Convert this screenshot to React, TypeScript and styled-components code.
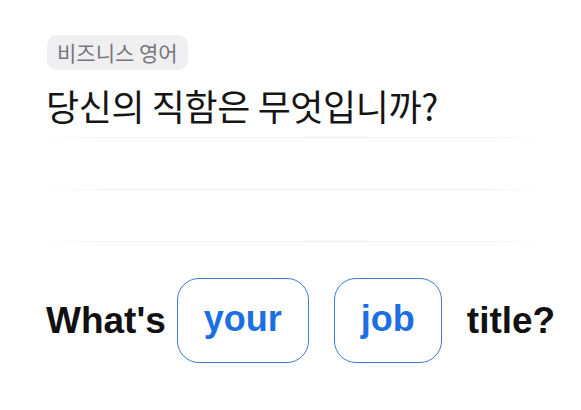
import React from 'react';
import styled, { createGlobalStyle } from 'styled-components';

const GlobalStyle = createGlobalStyle`
  html, body {
    margin: 0;
    padding: 0;
    background: #ffffff;
  }
  body {
    font-family: 'Liberation Sans', 'Noto Sans CJK KR', sans-serif;
  }
`;

const words: { text: string; slot?: boolean }[] = [
  { text: "What's" },
  { text: 'your', slot: true },
  { text: 'job', slot: true },
  { text: 'title?' },
];

const App = () => {
  return (
    <Page>
      <GlobalStyle />
      <Header>
        <Badge>비즈니스 영어</Badge>
        <Question>당신의 직함은 무엇입니까?</Question>
      </Header>
      <Rules>
        <Rule />
        <Rule />
        <Rule />
      </Rules>
      <Sentence>
        {words.map((w) =>
          w.slot ? <Slot key={w.text}>{w.text}</Slot> : <Word key={w.text}>{w.text}</Word>
        )}
      </Sentence>
    </Page>
  );
};
export default App;

const Page = styled.div`
  width: 581px;
  height: 410px;
  padding: 35px 36px 0 36px;
  box-sizing: border-box;
  display: flex;
  flex-direction: column;
`;
const Header = styled.div`
  display: flex;
  flex-direction: column;
  align-items: flex-start;
  padding-left: 11px;
`;
const Badge = styled.div`
  height: 35px;
  line-height: 35px;
  padding: 0 10px;
  border-radius: 10px;
  background: #efeff1;
  color: #76767b;
  font-family: 'Noto Sans CJK KR', sans-serif;
  font-size: 21px;
`;
const Question = styled.h1`
  margin: 15px 0 0 -1px;
  height: 40px;
  line-height: 40px;
  font-family: 'Noto Sans CJK KR', sans-serif;
  font-weight: 400;
  font-size: 36px;
  letter-spacing: -0.4px;
  color: #151515;
`;
const Rules = styled.div`
  display: flex;
  flex-direction: column;
  gap: 51px;
  margin-top: 12px;
`;
const Rule = styled.div`
  height: 1px;
  background: linear-gradient(
    90deg,
    rgba(238, 238, 238, 0) 0%,
    #f1f1f1 15%,
    #eeeeee 60%,
    #f1f1f1 88%,
    rgba(238, 238, 238, 0) 100%
  );
`;
const Sentence = styled.div`
  display: flex;
  align-items: center;
  column-gap: 11px;
  margin-top: 36px;
  padding-left: 10px;
`;
const Word = styled.span`
  font-size: 37px;
  font-weight: 700;
  color: #111111;
`;
const Slot = styled.span`
  display: flex;
  align-items: center;
  height: 85px;
  box-sizing: border-box;
  padding: 0 26px 4px 26px;
  margin-right: 14px;
  border: 1.5px solid #3a7ad8;
  border-radius: 22px;
  font-size: 36px;
  font-weight: 700;
  color: #1c6fe3;
`;
